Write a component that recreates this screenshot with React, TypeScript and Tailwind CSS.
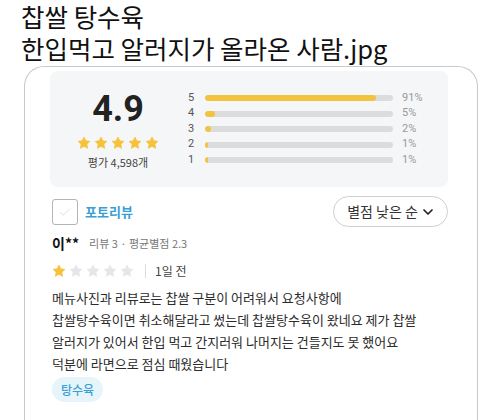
import React from "react";

const KR = { fontFamily: '"Noto Sans CJK KR", "Noto Sans", sans-serif' };
const NUM = { fontFamily: 'Roboto, "Noto Sans CJK KR", sans-serif' };

function Star({ size, color }: { size: number; color: string }) {
  return (
    <svg width={size} height={size} viewBox="0 0 24 24" aria-hidden>
      <path
        d="M12 1.8l3.1 6.5 7.1.9-5.2 4.9 1.3 7.1L12 17.8l-6.3 3.4 1.3-7.1-5.2-4.9 7.1-.9z"
        fill={color}
        stroke={color}
        strokeWidth="1.2"
        strokeLinejoin="round"
      />
    </svg>
  );
}

const rows = [
  { n: 5, pct: 91, w: 91 },
  { n: 4, pct: 5, w: 5.5 },
  { n: 3, pct: 2, w: 3 },
  { n: 2, pct: 1, w: 1.5 },
  { n: 1, pct: 1, w: 1.5 },
];

export default function App() {
  return (
    <div className="h-[420px] w-[500px] overflow-hidden bg-white text-[#111]" style={KR}>
      <div className="pl-[21px] text-[25.5px] leading-[32px] text-[#111]">
        <p>찹쌀 탕수육</p>
        <p>한입먹고 알러지가 올라온 사람.jpg</p>
      </div>

      <div className="ml-[24px] mt-[2px] h-[400px] w-[454px] rounded-t-[20px] border border-b-0 border-[#c9c9c9] pl-[25px] pr-[29px] pt-[4px]">
        {/* rating summary */}
        <div className="flex h-[116px] items-center rounded-[8px] bg-[#f5f6f8]">
          <div className="flex w-[136px] flex-col items-center">
            <div className="text-[36px] font-bold leading-[40px] text-[#222]" style={NUM}>
              4.9
            </div>
            <div className="mt-[7px] flex gap-[3px]">
              {[0, 1, 2, 3, 4].map((i) => (
                <Star key={i} size={14} color="#f5c23a" />
              ))}
            </div>
            <div className="mt-[4px] text-[11px] leading-[16px] text-[#444]">평가 4,598개</div>
          </div>
          <div className="flex flex-col">
            {rows.map((r) => (
              <div key={r.n} className="flex h-[15.5px] items-center">
                <span className="w-[19px] pl-[2px] text-[11px] text-[#555]" style={NUM}>
                  {r.n}
                </span>
                <div className="h-[6px] w-[188px] overflow-hidden rounded-full bg-[#dcdcdc]">
                  <div className="h-full rounded-full bg-[#f3c23e]" style={{ width: `${r.w}%` }} />
                </div>
                <span className="ml-[9px] text-[11px] text-[#9a9a9a]" style={NUM}>
                  {r.pct}%
                </span>
              </div>
            ))}
          </div>
        </div>

        {/* filters */}
        <div className="mt-[9px] flex h-[31px] items-center justify-between">
          <div className="flex items-center">
            <div className="ml-[2px] flex h-[26px] w-[26px] items-center justify-center rounded-[3px] border border-[#b5b5b5]">
              <svg width="14" height="14" viewBox="0 0 24 24" fill="none" aria-hidden>
                <path d="M4 12.5l5 5L20 6.5" stroke="#dedede" strokeWidth="1.6" strokeLinecap="round" strokeLinejoin="round" />
              </svg>
            </div>
            <span className="ml-[7px] text-[13px] font-bold text-[#3a9fd6]">포토리뷰</span>
          </div>
          <div className="flex h-[31px] w-[115px] items-center justify-center gap-[4px] rounded-full border border-[#cfcfcf] bg-white">
            <span className="text-[14px] text-[#333]">별점 낮은 순</span>
            <svg width="12" height="12" viewBox="0 0 24 24" fill="none" aria-hidden>
              <path d="M4 8l8 8 8-8" stroke="#222" strokeWidth="3.5" strokeLinecap="round" strokeLinejoin="round" />
            </svg>
          </div>
        </div>

        {/* reviewer */}
        <div className="ml-[2px] mt-[6px] flex items-center leading-[20px]">
          <span className="text-[14px] font-bold text-[#111]">이**</span>
          <span className="ml-[10px] text-[11px] text-[#777]">리뷰 3 · 평균별점 2.3</span>
        </div>

        <div className="ml-[2px] mt-[8px] flex h-[20px] items-center">
          <div className="flex gap-[3px]">
            <Star size={14} color="#f5c23a" />
            {[0, 1, 2, 3].map((i) => (
              <Star key={i} size={14} color="#e6e6e6" />
            ))}
          </div>
          <div className="ml-[11px] h-[14px] w-px bg-[#dddddd]" />
          <span className="ml-[9px] text-[12px] text-[#444]">1일 전</span>
        </div>

        <div className="ml-[2px] mt-[6px] whitespace-nowrap text-[13px] leading-[22px] text-[#2b2b2b]">
          <p>메뉴사진과 리뷰로는 찹쌀 구분이 어려워서 요청사항에</p>
          <p>찹쌀탕수육이면 취소해달라고 썼는데 찹쌀탕수육이 왔네요 제가 찹쌀</p>
          <p>알러지가 있어서 한입 먹고 간지러워 나머지는 건들지도 못 했어요</p>
          <p>덕분에 라면으로 점심 때웠습니다</p>
        </div>

        <div className="ml-[2px] mt-[2px] flex h-[25px] w-[51px] items-center justify-center rounded-full bg-[#e5f5fa]">
          <span className="text-[12px] font-medium text-[#3a9fd6]">탕수육</span>
        </div>
      </div>
    </div>
  );
}
